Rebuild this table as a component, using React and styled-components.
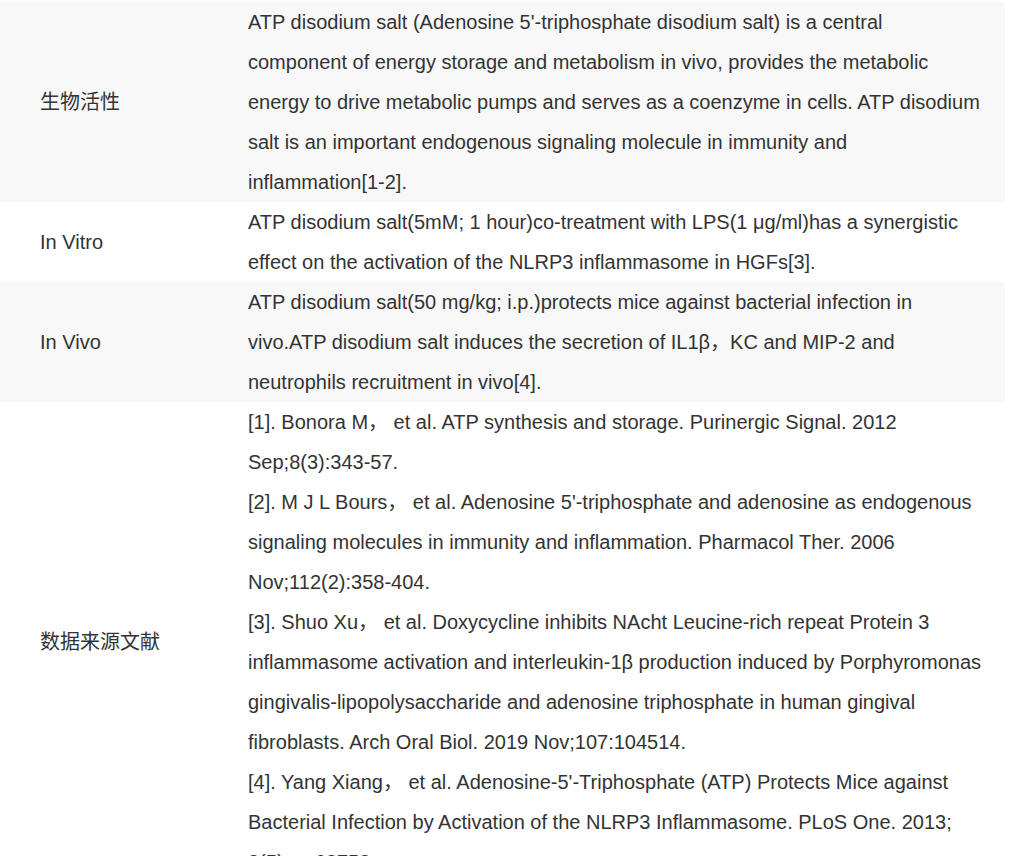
import React from "react";
import styled, { createGlobalStyle } from "styled-components";

const Global = createGlobalStyle`
  html, body { margin: 0; padding: 0; background: #fff; }
  body { font-family: "Liberation Sans", Arial, "Noto Sans CJK SC", sans-serif; color: #333; }
`;

const Page = styled.div`
  padding-top: 2px;
  width: 1005px;
`;

const Table = styled.table`
  width: 1005px;
  border-collapse: collapse;
  border-spacing: 0;
  table-layout: fixed;
  font-size: 20px;
  line-height: 40px;
  color: #333;
`;

const Row = styled.tr`
  background: ${(p) => (p.$shaded ? "#f8f8f8" : "#fff")};
`;

const Label = styled.td`
  padding: 0 0 0 40px;
  vertical-align: middle;
  font-family: "Liberation Sans", Arial, "Noto Sans CJK SC", sans-serif;
`;

const Value = styled.td`
  padding: 0 20px 0 0;
  vertical-align: middle;
`;

const Ref = styled.div``;

const rows = [
  {
    label: "生物活性",
    shaded: true,
    content:
      "ATP disodium salt (Adenosine 5'-triphosphate disodium salt) is a central component of energy storage and metabolism in vivo, provides the metabolic energy to drive metabolic pumps and serves as a coenzyme in cells. ATP disodium salt is an important endogenous signaling molecule in immunity and inflammation[1-2].",
  },
  {
    label: "In Vitro",
    shaded: false,
    content:
      "ATP disodium salt(5mM; 1 hour)co-treatment with LPS(1 μg/ml)has a synergistic effect on the activation of the NLRP3 inflammasome in HGFs[3].",
  },
  {
    label: "In Vivo",
    shaded: true,
    content:
      "ATP disodium salt(50 mg/kg; i.p.)protects mice against bacterial infection in vivo.ATP disodium salt induces the secretion of IL1β，KC and MIP-2 and neutrophils recruitment in vivo[4].",
  },
];

const refs = [
  "[1]. Bonora M， et al. ATP synthesis and storage. Purinergic Signal. 2012 Sep;8(3):343-57.",
  "[2]. M J L Bours， et al. Adenosine 5'-triphosphate and adenosine as endogenous signaling molecules in immunity and inflammation. Pharmacol Ther. 2006 Nov;112(2):358-404.",
  "[3]. Shuo Xu， et al. Doxycycline inhibits NAcht Leucine-rich repeat Protein 3 inflammasome activation and interleukin-1β production induced by Porphyromonas gingivalis-lipopolysaccharide and adenosine triphosphate in human gingival fibroblasts. Arch Oral Biol. 2019 Nov;107:104514.",
  "[4]. Yang Xiang， et al. Adenosine-5'-Triphosphate (ATP) Protects Mice against Bacterial Infection by Activation of the NLRP3 Inflammasome. PLoS One. 2013; 8(5)：e63758.",
];

export default function App() {
  return (
    <>
      <Global />
      <Page>
        <Table>
          <colgroup>
            <col style={{ width: 248 }} />
            <col />
          </colgroup>
          <tbody>
            {rows.map((r) => (
              <Row key={r.label} $shaded={r.shaded}>
                <Label>{r.label}</Label>
                <Value>{r.content}</Value>
              </Row>
            ))}
            <Row $shaded={false}>
              <Label>数据来源文献</Label>
              <Value>
                {refs.map((t) => (
                  <Ref key={t}>{t}</Ref>
                ))}
              </Value>
            </Row>
          </tbody>
        </Table>
      </Page>
    </>
  );
}
